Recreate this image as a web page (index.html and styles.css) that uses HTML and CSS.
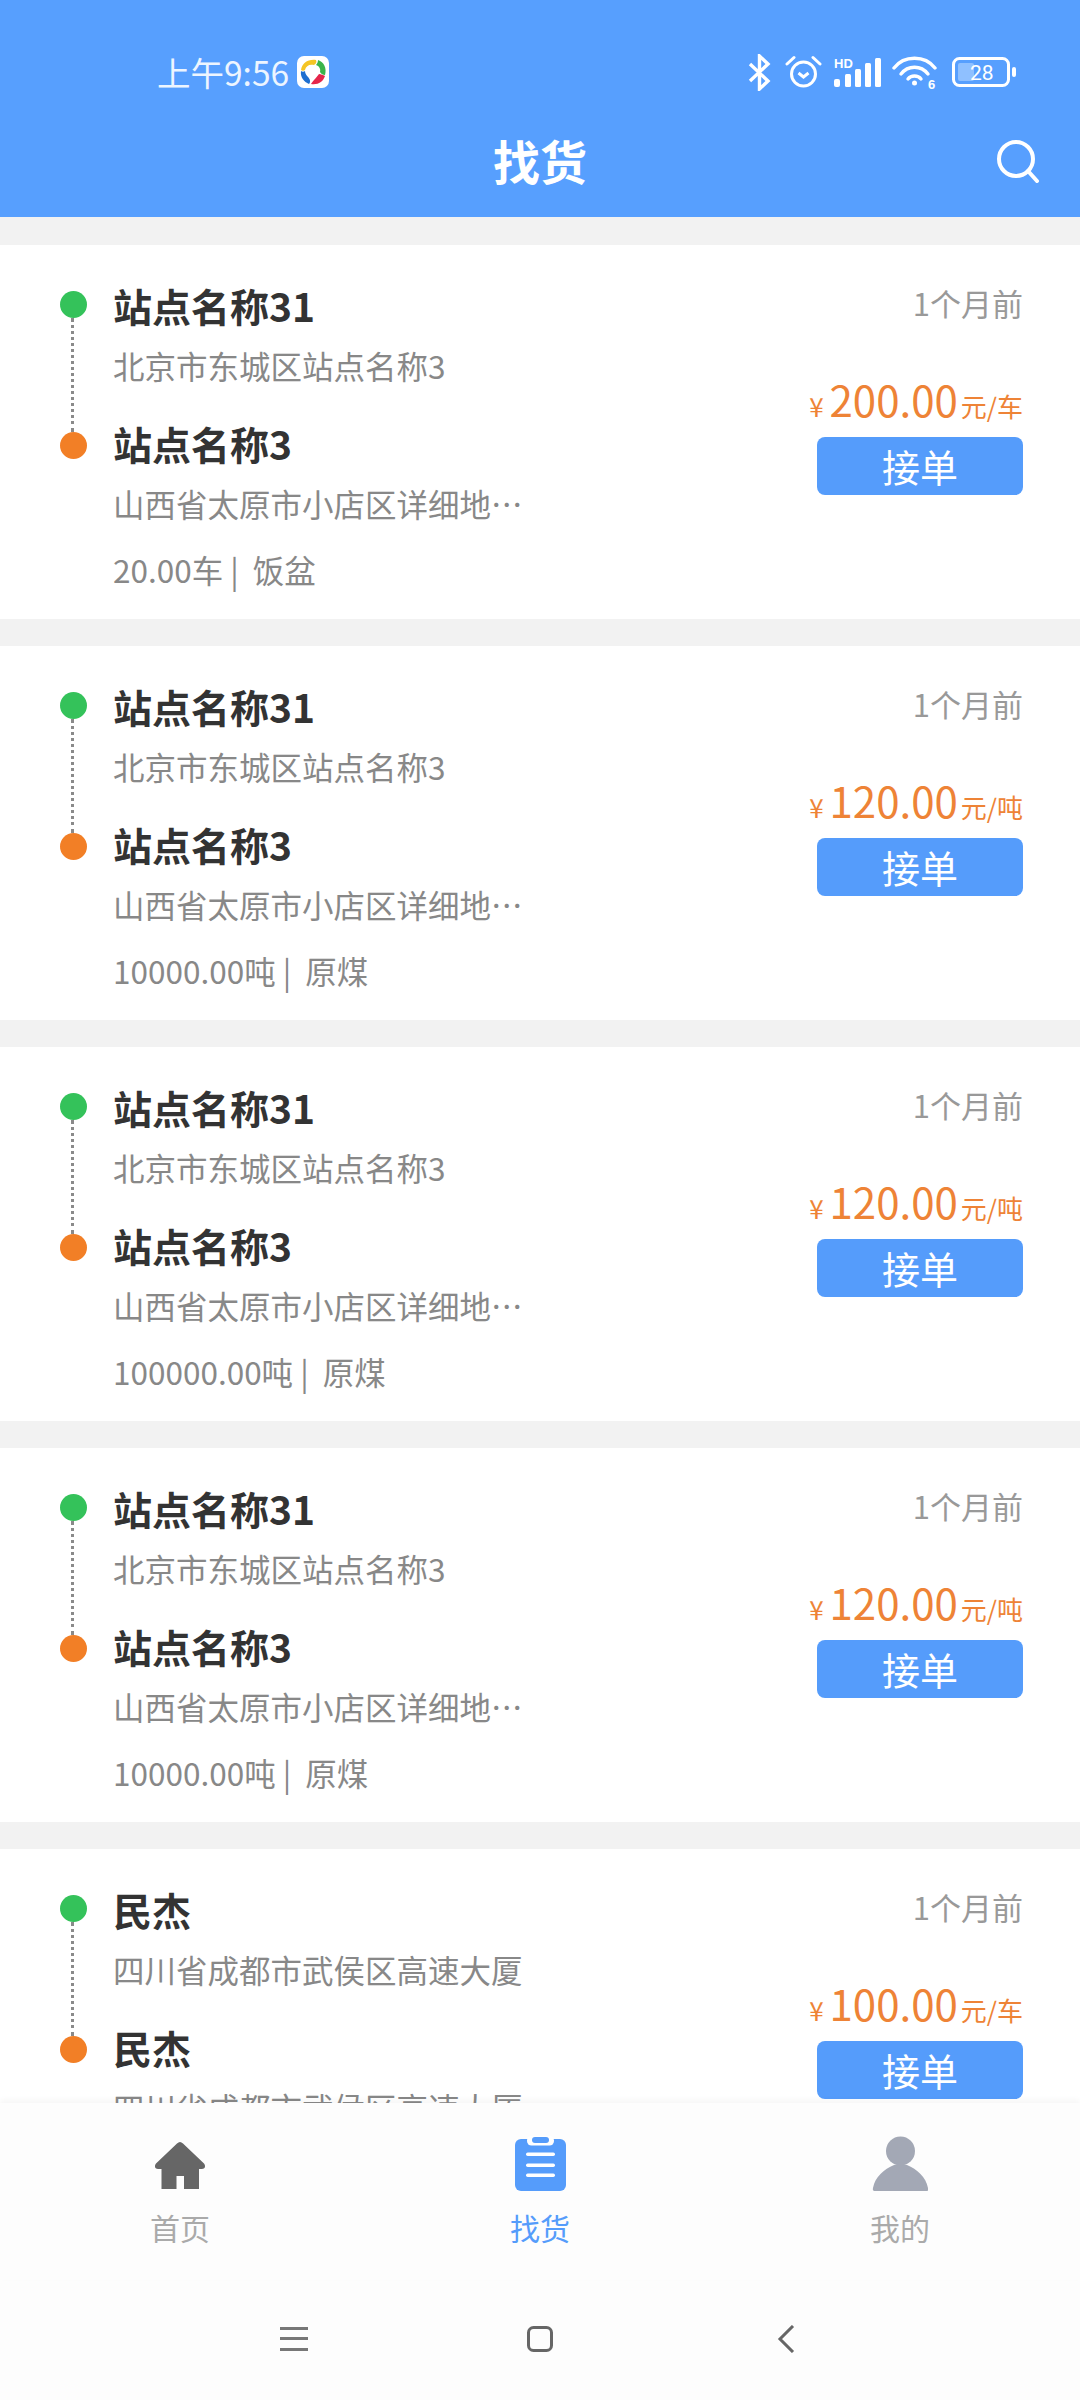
FILE: index.html
```html
<!DOCTYPE html>
<html lang="zh-CN">
<head>
  <meta charset="UTF-8" />
  <title>找货</title>
  <meta name="viewport" content="width=device-width, initial-scale=1" />
  <link rel="stylesheet" href="styles.css">
</head>
<body>
<div class="page">

  <header class="header">
    <div class="status">
      <span class="clock">上午9:56</span>
      <svg class="game" width="32" height="32" viewBox="0 0 32 32">
        <rect width="32" height="32" rx="7" fill="#fff"/>
        <path d="M4 14C5 7 11 3 19 4 20 6 19 8 17 9 12 8 9 10 8 14 7 15 5 15 4 14Z" fill="#f5c524"/>
        <path d="M21 4C27 6 30 12 28 19 26 19 24 18 23 16 24 13 22 10 19 9 20 8 21 6 21 4Z" fill="#3bb44a"/>
        <path d="M28 20C26 26 21 29 14 28 15 26 19 22 22 18 24 18 26 19 28 20Z" fill="#e5254a"/>
        <path d="M4 15C3 21 7 26 12 28 14 26 13 23 11 21 9 19 8 17 8 15 7 16 5 16 4 15Z" fill="#1e6fd0"/>
      </svg>
      <div class="status-icons">
        <svg class="bt" width="23" height="37" viewBox="0 0 23 37" fill="none" stroke="#fff" stroke-width="3.4">
          <path d="M2 10 20 27 11.500 35V2L20 10 2 27"/>
        </svg>
        <svg width="37" height="34" viewBox="0 0 37 34" fill="none" stroke="#fff" stroke-width="3">
          <circle cx="18.500" cy="19" r="12"/>
          <path d="M13.500 18 18.500 22 23.500 18"/>
          <path d="M2 9 9 2.500M35 9 28 2.500" stroke-linecap="round"/>
        </svg>
        <svg width="47" height="30" viewBox="0 0 47 30" fill="#fff">
          <text x="0" y="11" class="tiny">HD</text>
          <rect x="0" y="22" width="6" height="8" rx="2"/>
          <rect x="11" y="17" width="6" height="13" rx="1.500"/>
          <rect x="21" y="12" width="6" height="18" rx="1.500"/>
          <rect x="31" y="6" width="6" height="24" rx="1.500"/>
          <rect x="41" y="1" width="6" height="29" rx="1.500"/>
        </svg>
        <svg class="wifi" width="46" height="34" viewBox="0 0 46 34" fill="none" stroke="#fff" stroke-width="3.400" stroke-linecap="round">
          <path d="M2 13C12 0 33 0 43 13"/>
          <path d="M9 19C16 10 29 10 36 19"/>
          <path d="M16 24C19 20 26 20 29 24"/>
          <circle cx="22.500" cy="28" r="2.500" fill="#fff" stroke="none"/>
          <text x="36" y="34" class="tiny" stroke="none" fill="#fff">6</text>
        </svg>
        <svg width="65" height="30" viewBox="0 0 65 30">
          <rect x="1.500" y="1.500" width="55" height="27" rx="6" fill="none" stroke="#fff" stroke-width="3"/>
          <rect x="6" y="6" width="16" height="18" rx="2" fill="#8fc0ff"/>
          <text x="18" y="23" class="batt">28</text>
          <rect x="60" y="10" width="4" height="10" rx="2" fill="#fff"/>
        </svg>
      </div>
    </div>
    <div class="navbar">
      <span></span>
      <h1 class="title">找货</h1>
      <svg class="search" width="44" height="44" viewBox="0 0 44 44" fill="none" stroke="#fff" stroke-width="4" stroke-linecap="round">
        <circle cx="20" cy="20" r="17"/>
        <path d="M32 32 41 42"/>
      </svg>
    </div>
  </header>

  <main class="list">

    <section class="card">
      <div class="rail"><i class="dot green"></i><i class="line"></i><i class="dot orange"></i></div>
      <div class="stops">
        <div class="name">站点名称31</div>
        <div class="addr">北京市东城区站点名称3</div>
        <div class="name second">站点名称3</div>
        <div class="addr">山西省太原市小店区详细地址详细地址</div>
        <div class="meta">20.00车 | &nbsp;饭盆</div>
      </div>
      <div class="side">
        <div class="time">1个月前</div>
        <div class="price"><span class="yen">¥</span><span class="amount">200.00</span><span class="unit">元/车</span></div>
        <button class="take">接单</button>
      </div>
    </section>

    <section class="card">
      <div class="rail"><i class="dot green"></i><i class="line"></i><i class="dot orange"></i></div>
      <div class="stops">
        <div class="name">站点名称31</div>
        <div class="addr">北京市东城区站点名称3</div>
        <div class="name second">站点名称3</div>
        <div class="addr">山西省太原市小店区详细地址详细地址</div>
        <div class="meta">10000.00吨 | &nbsp;原煤</div>
      </div>
      <div class="side">
        <div class="time">1个月前</div>
        <div class="price"><span class="yen">¥</span><span class="amount">120.00</span><span class="unit">元/吨</span></div>
        <button class="take">接单</button>
      </div>
    </section>

    <section class="card">
      <div class="rail"><i class="dot green"></i><i class="line"></i><i class="dot orange"></i></div>
      <div class="stops">
        <div class="name">站点名称31</div>
        <div class="addr">北京市东城区站点名称3</div>
        <div class="name second">站点名称3</div>
        <div class="addr">山西省太原市小店区详细地址详细地址</div>
        <div class="meta">100000.00吨 | &nbsp;原煤</div>
      </div>
      <div class="side">
        <div class="time">1个月前</div>
        <div class="price"><span class="yen">¥</span><span class="amount">120.00</span><span class="unit">元/吨</span></div>
        <button class="take">接单</button>
      </div>
    </section>

    <section class="card">
      <div class="rail"><i class="dot green"></i><i class="line"></i><i class="dot orange"></i></div>
      <div class="stops">
        <div class="name">站点名称31</div>
        <div class="addr">北京市东城区站点名称3</div>
        <div class="name second">站点名称3</div>
        <div class="addr">山西省太原市小店区详细地址详细地址</div>
        <div class="meta">10000.00吨 | &nbsp;原煤</div>
      </div>
      <div class="side">
        <div class="time">1个月前</div>
        <div class="price"><span class="yen">¥</span><span class="amount">120.00</span><span class="unit">元/吨</span></div>
        <button class="take">接单</button>
      </div>
    </section>

    <section class="card">
      <div class="rail"><i class="dot green"></i><i class="line"></i><i class="dot orange"></i></div>
      <div class="stops">
        <div class="name">民杰</div>
        <div class="addr">四川省成都市武侯区高速大厦</div>
        <div class="name second">民杰</div>
        <div class="addr">四川省成都市武侯区高速大厦</div>
      </div>
      <div class="side">
        <div class="time">1个月前</div>
        <div class="price"><span class="yen">¥</span><span class="amount">100.00</span><span class="unit">元/车</span></div>
        <button class="take">接单</button>
      </div>
    </section>

  </main>

  <nav class="tabs">
    <div class="tab">
      <svg width="54" height="56" viewBox="0 0 54 56" fill="#666">
        <path d="M27 6C28 6 29 6.500 30 7.500L51 27.500C53 30 52 33 49 33H46V53H31V40H23.500V53H8.500V33H5C2 33 1 30 3 27.500L24 7.500C25 6.500 26 6 27 6Z"/>
      </svg>
      <span>首页</span>
    </div>
    <div class="tab on">
      <svg width="54" height="56" viewBox="0 0 54 56">
        <rect x="2" y="3" width="51" height="52" rx="6" fill="#559cfb"/>
        <rect x="14" y="0" width="27" height="9.500" rx="4.500" fill="#fff"/>
        <rect x="19" y="1" width="17" height="6" rx="3" fill="#559cfb"/>
        <rect x="13" y="16.500" width="29" height="3.500" rx="1.700" fill="#fff"/>
        <rect x="13" y="27.500" width="29" height="3.500" rx="1.700" fill="#fff"/>
        <rect x="13" y="37.500" width="29" height="3.500" rx="1.700" fill="#fff"/>
      </svg>
      <span>找货</span>
    </div>
    <div class="tab">
      <svg width="56" height="56" viewBox="0 0 56 56" fill="#a3a8b5">
        <circle cx="28.500" cy="15" r="14.500"/>
        <path d="M3 55C1 55 0.500 54 1 52 3 41 12 33 22 29H35C45 33 54 41 56 52 56.500 54 56 55 54 55Z"/>
      </svg>
      <span>我的</span>
    </div>
  </nav>

  <div class="sysnav">
    <div class="sys">
      <svg width="28" height="24" viewBox="0 0 28 24" fill="#777">
        <rect y="0" width="28" height="3"/><rect y="10" width="28" height="3"/><rect y="21" width="28" height="3"/>
      </svg>
    </div>
    <div class="sys">
      <svg width="26" height="26" viewBox="0 0 26 26" fill="none" stroke="#666" stroke-width="3">
        <rect x="1.500" y="1.500" width="23" height="23" rx="5"/>
      </svg>
    </div>
    <div class="sys">
      <svg width="20" height="28" viewBox="0 0 20 28" fill="none" stroke="#666" stroke-width="3">
        <path d="M17 1 4 14 17 27"/>
      </svg>
    </div>
  </div>

</div>
</body>
</html>
```

FILE: styles.css
```css
* {
  box-sizing: border-box;
}
body {
  margin: 0;
  font-family: "Noto Sans CJK SC", "Noto Sans", sans-serif;
  background: #f2f2f2;
}
.page {
  width: 1080px;
  height: 2400px;
  display: flex;
  flex-direction: column;
  overflow: hidden;
}

/* top bar */
.header {
  height: 217px;
  background: #579ffe;
  color: white;
  flex: none;
}
.status {
  height: 52px;
  margin-top: 46px;
  padding: 0 63px 0 157px;
  display: flex;
  align-items: center;
}
.clock {
  margin-bottom: 2px;
  font-size: 33.500px;
  color: #edf5ff;
}
.game {
  margin-left: 8px;
}
.status-icons {
  margin-left: auto;
  display: flex;
  align-items: center;
  gap: 12px;
}
.bt {
  margin-right: 2px;
}
.wifi {
  margin: 0 2px 0 -1px;
}
.tiny {
  font-family: "Liberation Sans", sans-serif;
  font-size: 13px;
  font-weight: bold;
}
.batt {
  font-family: "Roboto", sans-serif;
  font-size: 21px;
  fill: #fff;
}
.navbar {
  height: 119px;
  padding-top: 3px;
  display: grid;
  grid-template-columns: 1fr auto 1fr;
  align-items: center;
}
.title {
  margin: 0;
  font-size: 47px;
  font-weight: bold;
}
.search {
  justify-self: end;
  margin: 4px 40px 0 0;
}

/* cards */
.list {
  flex: 1;
  min-height: 0;
  overflow: hidden;
}
.card {
  height: 374px;
  margin-top: 27px;
  padding: 30px 57px 0 60px;
  background: white;
  display: flex;
  align-items: flex-start;
}
.card:first-child {
  margin-top: 28px;
}
.rail {
  width: 27px;
  height: 168px;
  margin-top: 16px;
  margin-right: 26px;
  display: flex;
  flex-direction: column;
  align-items: center;
  flex: none;
}
.dot {
  width: 27px;
  height: 27px;
  border-radius: 50%;
  flex: none;
}
.green {
  background: #34c25a;
}
.orange {
  background: #f27f26;
}
.line {
  flex: 1;
  margin-right: 2px;
  border-left: 3px dotted #8a8a8a;
}
.stops {
  width: 415px;
}
.name {
  font-size: 39px;
  font-weight: bold;
  line-height: 60px;
  color: #333;
}
.second {
  margin-top: 18px;
}
.addr {
  font-size: 31.500px;
  line-height: 60px;
  color: #888;
  white-space: nowrap;
  overflow: hidden;
  text-overflow: ellipsis;
}
.meta {
  margin-top: 6px;
  font-size: 31.500px;
  line-height: 60px;
  color: #888;
}
.side {
  margin-left: auto;
  display: flex;
  flex-direction: column;
  align-items: flex-end;
}
.time {
  font-size: 31px;
  line-height: 56px;
  color: #999;
}
.price {
  margin-top: 38px;
  height: 60px;
  line-height: 60px;
  color: #ee8336;
  white-space: nowrap;
}
.yen,
.unit {
  font-size: 26px;
}
.amount {
  margin: 0 3px 0 6px;
  font-size: 42px;
}
.take {
  width: 206px;
  height: 58px;
  margin-top: 8px;
  padding: 0;
  border: none;
  border-radius: 8px;
  background: #559cfb;
  color: white;
  font-family: inherit;
  font-size: 38px;
  line-height: 58px;
}

/* bottom tabs */
.tabs {
  height: 177px;
  padding-top: 33px;
  background: #fdfdfd;
  box-shadow: 0 -3px 6px rgba(0, 0, 0, 0.04);
  display: grid;
  grid-template-columns: repeat(3, 360px);
  flex: none;
  position: relative;
}
.tab {
  display: flex;
  flex-direction: column;
  align-items: center;
  font-size: 30px;
  line-height: 44px;
  color: #aaa;
}
.tab svg {
  margin-bottom: 13px;
}
.tab.on {
  color: #559cfb;
}
.sysnav {
  height: 120px;
  padding-bottom: 2px;
  background: #fdfdfd;
  display: flex;
  justify-content: center;
  align-items: center;
  flex: none;
}
.sys {
  width: 246px;
  display: flex;
  justify-content: center;
}
```
